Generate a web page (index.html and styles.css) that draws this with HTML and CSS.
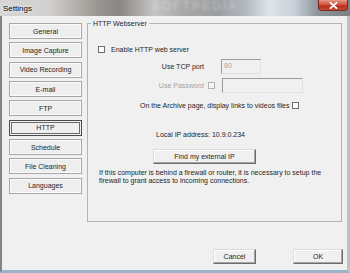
FILE: index.html
```html
<!DOCTYPE html>
<html>
<head>
<meta charset="utf-8">
<link rel="stylesheet" href="styles.css">
</head>
<body>
<div class="win">
  <div class="titlebar">
    <span class="title">Settings</span>
    <span class="wm">SOFTPEDIA</span>
    <div class="close">
      <svg width="9" height="7" viewBox="0 0 9 7"><path d="M1.5 0.8 L7.5 6.2 M7.5 0.8 L1.5 6.2" stroke="#fff" stroke-width="1.8" stroke-linecap="round"/></svg>
    </div>
  </div>
  <div class="client">
    <div class="main">
      <div class="nav">
        <div class="navbtn">General</div>
        <div class="navbtn">Image Capture</div>
        <div class="navbtn">Video Recording</div>
        <div class="navbtn">E-mail</div>
        <div class="navbtn">FTP</div>
        <div class="navbtn active">HTTP</div>
        <div class="navbtn">Schedule</div>
        <div class="navbtn">File Cleaning</div>
        <div class="navbtn">Languages</div>
      </div>
      <fieldset class="group">
        <legend>HTTP Webserver</legend>
        <div class="row r1"><span class="cb"></span><span class="lbl">Enable HTTP web server</span></div>
        <div class="row r2"><span class="rlabel">Use TCP port</span><span class="inp port">80</span></div>
        <div class="row r3"><span class="rlabel dis">Use Password</span><span class="cb dcb"></span><span class="inp pass"></span></div>
        <div class="row r4"><span>On the Archive page, display links to videos files</span><span class="cb"></span></div>
        <div class="row r5">Local IP address: 10.9.0.234</div>
        <div class="row r6"><span class="btn find">Find my external IP</span></div>
        <p class="para">If this computer is behind a firewall or router, it is necessary to setup the firewall to grant access to incoming connections.</p>
      </fieldset>
    </div>
    <div class="footer">
      <span class="btn cancel">Cancel</span>
      <span class="btn ok">OK</span>
    </div>
  </div>
</div>
</body>
</html>
```
FILE: styles.css
```css
html, body {
  margin: 0;
  padding: 0;
}
body {
  width: 350px;
  height: 273px;
  overflow: hidden;
  font-family: "Liberation Sans", Arial, sans-serif;
  font-size: 7px;
  color: #1e1e1e;
  background: #8aa0b4;
}
.win {
  width: 350px;
  height: 273px;
  display: flex;
  flex-direction: column;
}
.titlebar {
  height: 16px;
  flex: none;
  position: relative;
  overflow: hidden;
  display: flex;
  align-items: center;
  background: linear-gradient(90deg, #d6d6d6 0%, #d2d0ce 14%, #9a9590 28%, #8a8683 34%, #c4c4c4 44%, #a9a9a9 52%, #9c9ea1 62%, #b3b8bf 70%, #dfe4ea 77%, #c9d0d8 84%, #8d939a 91%, #7d8287 100%);
}
.title {
  font-size: 8px;
  margin-left: 3px;
  margin-top: 1px;
  color: #000;
  text-shadow: 0 0 3px #fff, 0 0 5px #fff;
}
.wm {
  position: absolute;
  left: 152px;
  top: 0;
  font-size: 12px;
  line-height: 12px;
  font-weight: bold;
  letter-spacing: 2px;
  color: rgba(255, 255, 255, 0.22);
  filter: blur(0.8px);
}
.close {
  position: absolute;
  right: 2px;
  top: 0;
  width: 30px;
  height: 11px;
  box-sizing: border-box;
  border: 1px solid #7a2a1f;
  border-top: none;
  border-radius: 0 0 4px 4px;
  background: linear-gradient(#e49a88 0%, #d2543f 45%, #b8301e 60%, #c84a34 100%);
  display: flex;
  align-items: center;
  justify-content: center;
}
.client {
  flex: 1;
  display: flex;
  flex-direction: column;
  background: #f0f0f0;
  border-left: 2px solid #7e858c;
  border-right: 3px solid #b9c1c9;
  border-bottom: 3px solid #9bb3c8;
}
.main {
  display: flex;
  gap: 5px;
  padding: 0 5px 0 7px;
  margin-top: 3px;
}
.nav {
  width: 73px;
  display: flex;
  flex-direction: column;
  gap: 3.35px;
  margin-top: 4px;
}
.navbtn {
  height: 16px;
  box-sizing: border-box;
  border: 1px solid #a7a7a7;
  box-shadow: inset 0 0 0 1px #fbfbfb;
  background: #eeeeee;
  display: flex;
  align-items: center;
  justify-content: center;
}
.navbtn.active {
  border-color: #4b4b4b;
  box-shadow: inset 0 0 0 1px #f0f0f0, inset 0 0 0 2px #6a6a6a;
}
.group {
  margin: 0;
  padding: 0;
  width: 255px;
  height: 203px;
  box-sizing: border-box;
  border: 1px solid #b0b5ba;
}
.group legend {
  padding: 0 2px;
  margin-left: 3px;
  line-height: 9px;
  font-size: 7px;
}
.row {
  display: flex;
  align-items: center;
  white-space: nowrap;
}
.r1 {
  margin-top: 17px;
  height: 9px;
  padding-left: 10px;
  gap: 6px;
}
.r2 {
  margin-top: 5px;
  height: 15px;
}
.rlabel {
  width: 116px;
  text-align: right;
}
.dis {
  color: #a2a2a2;
}
.r3 {
  margin-top: 4px;
  height: 15px;
}
.r3 .dcb {
  margin-left: 4px;
  margin-right: 7px;
}
.r2 .port {
  margin-left: 17px;
  width: 40px;
}
.pass {
  width: 81px;
}
.r4 {
  margin-top: 8px;
  height: 8px;
  padding-left: 52px;
  gap: 3px;
}
.r5 {
  margin-top: 21px;
  height: 8px;
  padding-left: 68px;
}
.r6 {
  margin-top: 11px;
  height: 15px;
  padding-left: 65px;
}
.cb {
  width: 7px;
  height: 7px;
  box-sizing: border-box;
  border: 1px solid #6e6e6e;
  background: #fff;
  flex: none;
}
.dcb {
  border-color: #b2b2b2;
  background: #f6f6f6;
}
.inp {
  height: 15px;
  box-sizing: border-box;
  border: 1px solid;
  border-color: #9c9c9c #e2e2e2 #e2e2e2 #9c9c9c;
  background: #f0f0f0;
  color: #a5a5a5;
  padding-left: 2px;
  line-height: 12px;
}
.btn {
  height: 15px;
  box-sizing: border-box;
  display: flex;
  align-items: center;
  justify-content: center;
  background: #f0f0f0;
  border: 1px solid;
  border-color: #dcdcdc #6c6c6c #6c6c6c #dcdcdc;
  box-shadow: inset -1px -1px 0 #a5a5a5, inset 1px 1px 0 #ffffff;
}
.find {
  width: 103px;
}
.para {
  margin: 5px 0 0 0;
  padding-left: 11px;
  padding-right: 4px;
  line-height: 8px;
}
.footer {
  display: flex;
  justify-content: flex-end;
  gap: 37px;
  padding-right: 4px;
  margin-top: 27px;
}
.cancel {
  width: 43px;
}
.ok {
  width: 50px;
}
```
